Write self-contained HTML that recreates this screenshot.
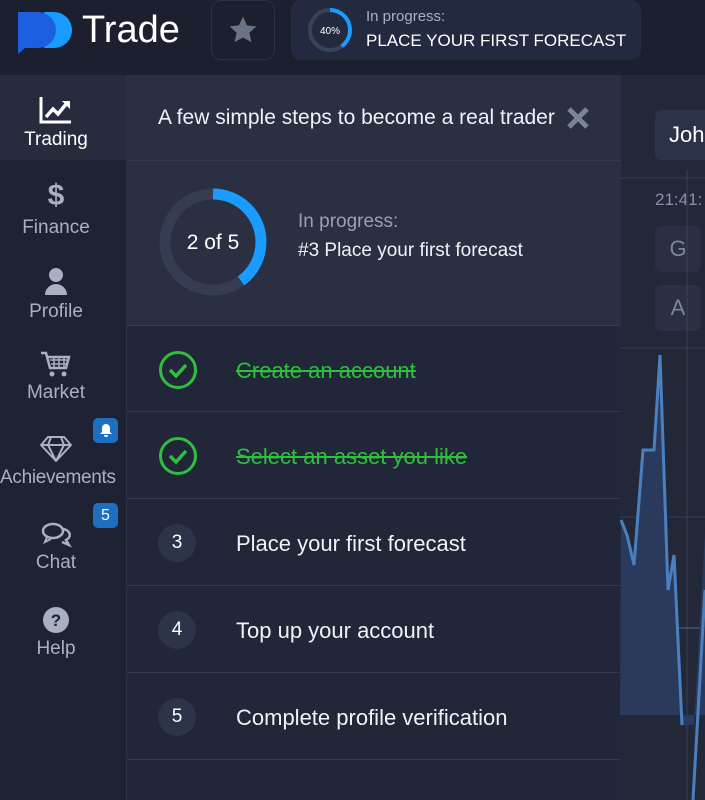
<!DOCTYPE html>
<html><head><meta charset="utf-8"><style>
*{margin:0;padding:0;box-sizing:border-box}
body{width:705px;height:800px;overflow:hidden;background:#1c1f2d;font-family:"Liberation Sans",sans-serif;position:relative;color:#fff}
.abs{position:absolute}
.side{left:0;top:75px;width:126px;height:725px;background:#1e2233}
.item{position:absolute;left:0;width:112px;text-align:center;color:#a9b0c2;font-size:19px;white-space:nowrap}
.item svg{display:block;margin:0 auto 4px}
.badge{position:absolute;left:93px;width:25px;height:25px;border-radius:5px;background:#1e6fc0;color:#fff;font-size:16px;text-align:center;line-height:25px}
.panel{left:126px;top:75px;width:494px;height:725px;background:#212638;border-left:1px solid #2c3246}
.row{position:absolute;left:0;width:494px;height:87px;border-bottom:1px solid #343a4f}
.num{position:absolute;left:31px;top:25px;width:38px;height:38px;border-radius:50%;background:#2e3447;color:#fff;font-size:19px;text-align:center;line-height:38px}
.rt{position:absolute;left:109px;top:32px;font-size:22px;color:#f0f2f6}
.done{color:#2fbf3c;text-decoration:line-through}
</style></head><body>
<!-- top bar -->
<svg class="abs" style="left:16px;top:8px" width="60" height="46" viewBox="0 0 60 46"><path d="M28 4h10a18 18 0 0 1 0 36H28z" fill="#1a9bff"/><path d="M2 4h20a18 18 0 0 1 0 36H9l-7 6z" fill="#1d5fe0"/></svg>
<div class="abs" style="left:82px;top:9px;font-size:38px;color:#fff">Trade</div>
<div class="abs" style="left:211px;top:0;width:64px;height:60px;border:1px solid #2b3042;border-radius:10px"></div>
<svg class="abs" style="left:226px;top:14px" width="34" height="32" viewBox="0 0 24 24"><path d="M12 2l3 6.5 7 .8-5.2 4.8 1.5 7L12 17.6 5.7 21.1l1.5-7L2 9.3l7-.8z" fill="#6b7387"/></svg>
<div class="abs" style="left:291px;top:0;width:350px;height:60px;background:#232a40;border-radius:10px"></div>
<svg class="abs" style="left:306px;top:6px" width="48" height="48" viewBox="0 0 48 48"><circle cx="24" cy="24" r="20" fill="none" stroke="#3a4259" stroke-width="4"/><circle cx="24" cy="24" r="20" fill="none" stroke="#1a9bff" stroke-width="4" stroke-dasharray="50.3 125.7" transform="rotate(-90 24 24)"/><text x="24" y="28" font-size="10" fill="#fff" text-anchor="middle" font-family="Liberation Sans">40%</text></svg>
<div class="abs" style="left:366px;top:8px;font-size:15px;color:#a9b0c2">In progress:</div>
<div class="abs" style="left:366px;top:31px;font-size:17px;color:#fff">PLACE YOUR FIRST FORECAST</div>
<!-- sidebar -->
<div class="abs side">
<div class="abs" style="left:0;top:0;width:126px;height:85px;background:#262b3d"></div>
<div class="item" style="top:20px;color:#fff"><svg width="36" height="30" viewBox="0 0 36 30"><path d="M3 2v25h30" stroke="#fff" stroke-width="3" fill="none"/><path d="M8 22l7-8 5 5 9-11" stroke="#fff" stroke-width="3.5" fill="none"/><path d="M24 6h8v8z" fill="#fff"/></svg>Trading</div>
<div class="item" style="top:106px"><div style="font-size:30px;font-weight:bold;line-height:30px;margin-bottom:6px">$</div>Finance</div>
<div class="item" style="top:192px"><svg width="24" height="30" viewBox="0 0 24 30"><circle cx="12" cy="8" r="7" fill="#a9b0c2"/><path d="M1 28a11 11 0 0 1 22 0z" fill="#a9b0c2"/></svg>Profile</div>
<div class="item" style="top:275px"><svg width="32" height="28" viewBox="0 0 32 28"><path d="M1 3h5l4 15h16l3-11H8" stroke="#a9b0c2" stroke-width="2.5" fill="none"/><path d="M10 10h17M11 14h15M14 7v11M19 7v11M24 7v11" stroke="#a9b0c2" stroke-width="1.5"/><circle cx="12" cy="24" r="2.5" fill="#a9b0c2"/><circle cx="24" cy="24" r="2.5" fill="#a9b0c2"/></svg>Market</div>
<div class="item" style="top:360px;letter-spacing:-0.3px"><svg width="34" height="28" viewBox="0 0 34 28"><path d="M9 2h16l7 8-15 16L2 10z M2 10h30 M12 2l-3 8 8 16 8-16-3-8" stroke="#a9b0c2" stroke-width="2" fill="none" stroke-linejoin="round"/></svg>Achievements</div>
<div class="badge" style="top:343px"><svg width="14" height="14" viewBox="0 0 14 14" style="margin-top:5px"><path d="M7 1a4 4 0 0 1 4 4v4l2 2H1l2-2V5a4 4 0 0 1 4-4zM5 12h4a2 2 0 0 1-4 0z" fill="#fff"/></svg></div>
<div class="item" style="top:445px"><svg width="32" height="28" viewBox="0 0 32 28"><ellipse cx="13" cy="11" rx="10" ry="7" stroke="#a9b0c2" stroke-width="2.5" fill="none"/><path d="M7 17l-2 5 6-3" stroke="#a9b0c2" stroke-width="2" fill="none"/><path d="M23 9a8 6 0 0 1 3 11l3 5-7-3" stroke="#a9b0c2" stroke-width="2.5" fill="none"/></svg>Chat</div>
<div class="badge" style="top:428px">5</div>
<div class="item" style="top:531px"><svg width="28" height="28" viewBox="0 0 28 28"><circle cx="14" cy="14" r="13" fill="#a9b0c2"/><text x="14" y="20" font-size="17" font-weight="bold" fill="#1e2233" text-anchor="middle" font-family="Liberation Sans">?</text></svg>Help</div>
</div>
<!-- chart area -->
<div class="abs" style="left:620px;top:75px;width:85px;height:725px;background:#232839"></div>
<div class="abs" style="left:655px;top:110px;width:60px;height:50px;background:#2c3247;border-radius:6px;font-size:22px;color:#fff;padding:12px 0 0 14px">Joh</div>
<div class="abs" style="left:655px;top:190px;font-size:17px;color:#8a91a5">21:41:</div>
<div class="abs" style="left:655px;top:226px;width:46px;height:46px;background:#2a2f42;border-radius:6px;font-size:22px;color:#7e859a;text-align:center;line-height:46px">G</div>
<div class="abs" style="left:655px;top:285px;width:46px;height:46px;background:#2a2f42;border-radius:6px;font-size:22px;color:#7e859a;text-align:center;line-height:46px">A</div>
<svg class="abs" style="left:620px;top:170px" width="85" height="630" viewBox="0 0 85 630"><line x1="67" y1="0" x2="67" y2="630" stroke="#3a4158" stroke-width="1"/><line x1="0" y1="8" x2="85" y2="8" stroke="#343a4f"/><line x1="0" y1="178" x2="85" y2="178" stroke="#343a4f"/><line x1="0" y1="347" x2="85" y2="347" stroke="#343a4f"/><line x1="0" y1="458" x2="85" y2="458" stroke="#4a6a9a"/><path d="M1 350l6 15 7 30 9-115h11l6-95 8 235 6-35 8 170h12l12-210v200H0z" fill="#2a3a5c"/><path d="M1 350l6 15 7 30 9-115h11l6-95 8 235 6-35 8 170M73 630l12-210" stroke="#4a80c0" stroke-width="3" fill="none"/></svg>
<!-- panel -->
<div class="abs panel">
<div class="abs" style="left:0;top:0;width:494px;height:250px;background:#2a2f42"></div>
<div class="abs" style="left:31px;top:31px;font-size:21px;color:#f0f2f6">A few simple steps to become a real trader</div>
<svg class="abs" style="left:439px;top:31px" width="24" height="24" viewBox="0 0 24 24"><path d="M3 3l18 18M21 3L3 21" stroke="#7a8398" stroke-width="5"/></svg>
<div class="abs" style="left:0;top:85px;width:494px;height:1px;background:#343a4f"></div>
<svg class="abs" style="left:31px;top:112px" width="110" height="110" viewBox="0 0 110 110"><circle cx="55" cy="55" r="48" fill="none" stroke="#363d52" stroke-width="11"/><circle cx="55" cy="55" r="48" fill="none" stroke="#1a9bff" stroke-width="11" stroke-dasharray="120.6 181" transform="rotate(-90 55 55)"/><text x="55" y="62" font-size="21" fill="#fff" text-anchor="middle" font-family="Liberation Sans">2 of 5</text></svg>
<div class="abs" style="left:171px;top:136px;font-size:19px;color:#9aa1b4">In progress:</div>
<div class="abs" style="left:171px;top:165px;font-size:19px;color:#f0f2f6">#3 Place your first forecast</div>
<div class="row" style="top:250px;border-top:1px solid #343a4f"><svg class="abs" style="left:31px;top:24px" width="40" height="40" viewBox="0 0 40 40"><circle cx="20" cy="20" r="17.5" fill="none" stroke="#2fbf3c" stroke-width="3"/><path d="M12 20l6 6 10-11" stroke="#2fbf3c" stroke-width="3.5" fill="none"/></svg><div class="rt done">Create an account</div></div>
<div class="row" style="top:337px"><svg class="abs" style="left:31px;top:24px" width="40" height="40" viewBox="0 0 40 40"><circle cx="20" cy="20" r="17.5" fill="none" stroke="#2fbf3c" stroke-width="3"/><path d="M12 20l6 6 10-11" stroke="#2fbf3c" stroke-width="3.5" fill="none"/></svg><div class="rt done">Select an asset you like</div></div>
<div class="row" style="top:424px"><div class="num">3</div><div class="rt">Place your first forecast</div></div>
<div class="row" style="top:511px"><div class="num">4</div><div class="rt">Top up your account</div></div>
<div class="row" style="top:598px"><div class="num">5</div><div class="rt">Complete profile verification</div></div>
</div>
</body></html>
